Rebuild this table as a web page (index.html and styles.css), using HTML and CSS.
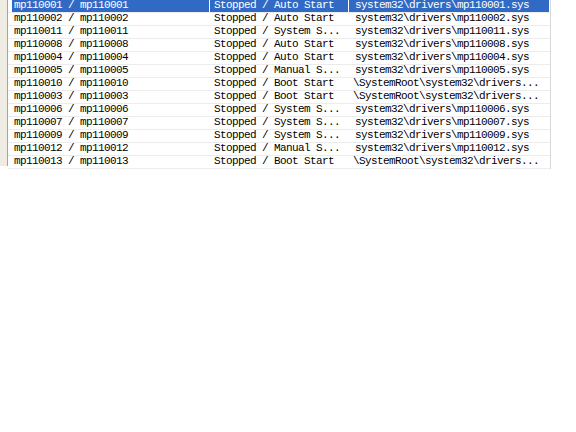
FILE: index.html
```html
<!DOCTYPE html>
<html>
<head>
<meta charset="utf-8">
<link rel="stylesheet" href="styles.css">
</head>
<body>
<div class="frame">
  <div class="strip"></div>
  <div class="list">
    <div class="row sel"><span class="c1">mp110001 / mp110001</span><span class="c2">Stopped / Auto Start</span><span class="c3">system32\drivers\mp110001.sys</span></div>
    <div class="row"><span class="c1">mp110002 / mp110002</span><span class="c2">Stopped / Auto Start</span><span class="c3">system32\drivers\mp110002.sys</span></div>
    <div class="row"><span class="c1">mp110011 / mp110011</span><span class="c2">Stopped / System S...</span><span class="c3">system32\drivers\mp110011.sys</span></div>
    <div class="row"><span class="c1">mp110008 / mp110008</span><span class="c2">Stopped / Auto Start</span><span class="c3">system32\drivers\mp110008.sys</span></div>
    <div class="row"><span class="c1">mp110004 / mp110004</span><span class="c2">Stopped / Auto Start</span><span class="c3">system32\drivers\mp110004.sys</span></div>
    <div class="row"><span class="c1">mp110005 / mp110005</span><span class="c2">Stopped / Manual S...</span><span class="c3">system32\drivers\mp110005.sys</span></div>
    <div class="row"><span class="c1">mp110010 / mp110010</span><span class="c2">Stopped / Boot Start</span><span class="c3 root">\SystemRoot\system32\drivers...</span></div>
    <div class="row"><span class="c1">mp110003 / mp110003</span><span class="c2">Stopped / Boot Start</span><span class="c3 root">\SystemRoot\system32\drivers...</span></div>
    <div class="row"><span class="c1">mp110006 / mp110006</span><span class="c2">Stopped / System S...</span><span class="c3">system32\drivers\mp110006.sys</span></div>
    <div class="row"><span class="c1">mp110007 / mp110007</span><span class="c2">Stopped / System S...</span><span class="c3">system32\drivers\mp110007.sys</span></div>
    <div class="row"><span class="c1">mp110009 / mp110009</span><span class="c2">Stopped / System S...</span><span class="c3">system32\drivers\mp110009.sys</span></div>
    <div class="row"><span class="c1">mp110012 / mp110012</span><span class="c2">Stopped / Manual S...</span><span class="c3">system32\drivers\mp110012.sys</span></div>
    <div class="row"><span class="c1">mp110013 / mp110013</span><span class="c2">Stopped / Boot Start</span><span class="c3 root">\SystemRoot\system32\drivers...</span></div>
  </div>
</div>
</body>
</html>
```
FILE: styles.css
```css
html, body {
  margin: 0;
  padding: 0;
  background: #ffffff;
}
.frame {
  display: flex;
  align-items: stretch;
  width: 551px;
}
.strip {
  width: 7px;
  background: #efede3;
  border-right: 1px solid #a7a69b;
  margin-bottom: 3px;
}
.list {
  width: 542px;
  border-right: 1px solid #d8d8d8;
  display: flex;
  flex-direction: column;
}
.row {
  display: grid;
  grid-template-columns: 197px 138px 200px;
  column-gap: 1px;
  padding-left: 4px;
  padding-right: 1px;
  height: 12px;
  border-bottom: 1px solid #ececec;
  font-family: "Liberation Mono", "DejaVu Sans Mono", monospace;
  font-size: 11px;
  letter-spacing: -0.6px;
  line-height: 11px;
  color: #000000;
  white-space: nowrap;
}
.row span {
  overflow: hidden;
  display: block;
}
.c1 { padding-left: 2px; }
.c2 { padding-left: 4px; }
.c3 { padding-left: 6px; }
.c3.root { padding-left: 4px; }
.sel span {
  background: #316ac5;
  color: #ffffff;
}
```
